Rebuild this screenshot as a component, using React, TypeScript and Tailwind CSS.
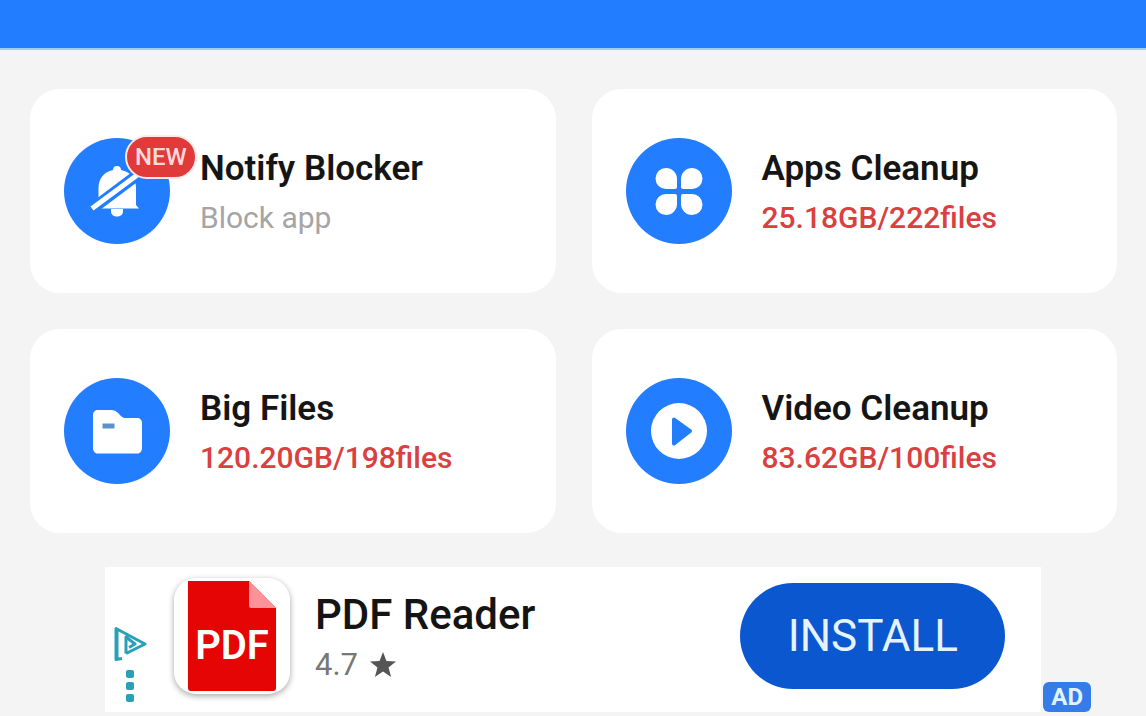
import type { ReactNode } from "react";

interface Tool {
  title: string;
  detail: string;
  muted?: boolean;
  badge?: string;
  icon: ReactNode;
}

const BellOffIcon = () => (
  <svg viewBox="0 0 106 106" className="size-full" aria-hidden="true">
    <g fill="#fff">
      <path d="M53 28c2.600 0 4 1.600 4 4 9.500 2 15 8.500 15 18v17l3 3.500H31l3.500-3.500V50c0-9.500 5.500-16 14.500-18 0-2.400 1.400-4 4-4z" />
      <path d="M47 71h12v2.500a5 5 0 0 1-5 5h-2a5 5 0 0 1-5-5z" />
    </g>
    <path d="M26 72.500L76 35" stroke="#227dff" strokeWidth="11" />
    <path d="M28 70.500L76 35" stroke="#fff" strokeWidth="5" />
  </svg>
);

const AppsIcon = () => (
  <svg viewBox="0 0 106 106" className="size-full" aria-hidden="true">
    <g fill="#fff">
      <path d="M40 30a11 11 0 0 1 11 11v8a2 2 0 0 1-2 2h-9a10.500 10.500 0 0 1 0-21z" />
      <path d="M66 30a11 11 0 0 0-11 11v8a2 2 0 0 0 2 2h9a10.500 10.500 0 0 0 0-21z" />
      <path d="M40 77a11 11 0 0 0 11-11v-8a2 2 0 0 0-2-2h-9a10.500 10.500 0 0 0 0 21z" />
      <path d="M66 77a11 11 0 0 1-11-11v-8a2 2 0 0 1 2-2h9a10.500 10.500 0 0 1 0 21z" />
    </g>
  </svg>
);

const FolderIcon = () => (
  <svg viewBox="0 0 106 106" className="size-full" aria-hidden="true">
    <path
      d="M34 32h13c5 0 7 3 10 6 1.500 1.500 2.500 2 5 2h11c3 0 5 2 5 5v25c0 3.500-2 5.500-5 5.500H34c-3 0-5-2-5-5.500V37c0-3 2-5 5-5z"
      fill="#fff"
    />
    <path d="M38.500 48h12" stroke="#5b92c8" strokeWidth="5" />
  </svg>
);

const PlayIcon = () => (
  <svg viewBox="0 0 106 106" className="size-full" aria-hidden="true">
    <circle cx="53" cy="53" r="28" fill="#fff" />
    <path
      d="M48 41.500L64 53 48 65.500z"
      fill="#227dff"
      stroke="#227dff"
      strokeWidth="4"
      strokeLinejoin="round"
    />
  </svg>
);

const PdfIcon = () => (
  <svg viewBox="0 0 116 116" className="size-full" aria-hidden="true">
    <path d="M14 3h61l27 27v80a3 3 0 0 1-3 3H17a3 3 0 0 1-3-3z" fill="#e60505" />
    <path d="M75 3l27 27H77a2 2 0 0 1-2-2z" fill="#ff9298" />
    <text
      x="58"
      y="81"
      textAnchor="middle"
      fontFamily="Roboto, sans-serif"
      fontSize="40"
      fontWeight="600"
      fill="#fff"
    >
      PDF
    </text>
  </svg>
);

const AdChoicesIcon = () => (
  <svg viewBox="0 0 34 36" className="h-9 w-[34px]" fill="none" aria-hidden="true">
    <path
      d="M13 27.500V11L22 18l-6 3.500M9 32.500l-6 1v-31L32 18 13 27.500M4 4v28"
      stroke="#2a9fb8"
      strokeWidth="3"
      strokeLinejoin="round"
    />
  </svg>
);

const tools: Tool[] = [
  {
    title: "Notify Blocker",
    detail: "Block app",
    muted: true,
    badge: "NEW",
    icon: <BellOffIcon />,
  },
  { title: "Apps Cleanup", detail: "25.18GB/222files", icon: <AppsIcon /> },
  { title: "Big Files", detail: "120.20GB/198files", icon: <FolderIcon /> },
  { title: "Video Cleanup", detail: "83.62GB/100files", icon: <PlayIcon /> },
];

const ToolCard = ({ title, detail, muted, badge, icon }: Tool) => {
  return (
    <button
      type="button"
      className="flex items-center gap-[30px] rounded-[30px] bg-white px-[34px] py-[49px] text-left"
    >
      <span className="relative size-[106px] shrink-0 rounded-full bg-[#227dff]">
        {icon}
        {badge && (
          <span className="absolute -top-[3px] left-[61px] rounded-full border-2 border-[#ffe8e8] bg-[#e03a3a] px-2 text-[24px] leading-10 font-medium text-[#ffd9d9]">
            {badge}
          </span>
        )}
      </span>
      <span className="flex flex-col pt-1 leading-[49px] whitespace-nowrap">
        <span className="text-[35px] font-semibold text-[#151515]">{title}</span>
        <span
          className={
            muted ? "text-[30px] text-[#a5a5a5]" : "text-[30px] font-medium text-[#d9403f]"
          }
        >
          {detail}
        </span>
      </span>
    </button>
  );
};

const AdBanner = () => {
  return (
    <aside className="flex items-end gap-0.5 pt-[34px] pr-[55px] pl-[105px]">
      <div className="flex h-[145px] flex-1 items-center bg-white pr-9 pb-2 pl-2">
        <div className="flex flex-col items-center gap-1 self-end pb-0.5">
          <a href="#adchoices" aria-label="AdChoices">
            <AdChoicesIcon />
          </a>
          <button type="button" aria-label="Ad options" className="flex flex-col gap-1 p-1 pb-0">
            <span className="size-2 rounded-xs bg-[#2a9fb8]" />
            <span className="size-2 rounded-xs bg-[#2a9fb8]" />
            <span className="size-2 rounded-xs bg-[#2a9fb8]" />
          </button>
        </div>
        <div className="ml-[27px] size-[116px] shrink-0 rounded-[22px] bg-white shadow-[0_2px_6px_rgba(0,0,0,0.35)]">
          <PdfIcon />
        </div>
        <div className="ml-[25px] flex-1 pt-2 whitespace-nowrap">
          <h2 className="text-[42px] leading-[50px] font-medium text-[#141414]">PDF Reader</h2>
          <p className="flex items-center gap-3 text-[31px] leading-[50px] text-[#777]">
            4.7
            <svg viewBox="0 0 24 24" className="size-[26px]" fill="#555" aria-label="stars">
              <path d="M12 0l3.200 8.300 8.800.5-6.900 5.500L19.500 23 12 18l-7.500 5 2.400-8.700L0 8.800l8.800-.5z" />
            </svg>
          </p>
        </div>
        <button
          type="button"
          className="h-[106px] w-[265px] shrink-0 rounded-full bg-[#0b57d0] text-[44px] text-[#e6f3ff]"
        >
          INSTALL
        </button>
      </div>
      <span className="rounded-md bg-[#357ce8] px-2 text-[24px] leading-[30px] font-bold text-[#e2f2ff]">
        AD
      </span>
    </aside>
  );
};

export default function App() {
  return (
    <div className="min-h-screen bg-[#f4f4f4] font-[Roboto,sans-serif]">
      <header className="h-[50px] border-b-2 border-[#a3cbf5] bg-[#227dff]" />
      <main className="pt-[39px]">
        <section className="grid grid-cols-2 gap-9 pr-[29px] pl-[30px]">
          {tools.map((tool) => (
            <ToolCard key={tool.title} {...tool} />
          ))}
        </section>
        <AdBanner />
      </main>
    </div>
  );
}
